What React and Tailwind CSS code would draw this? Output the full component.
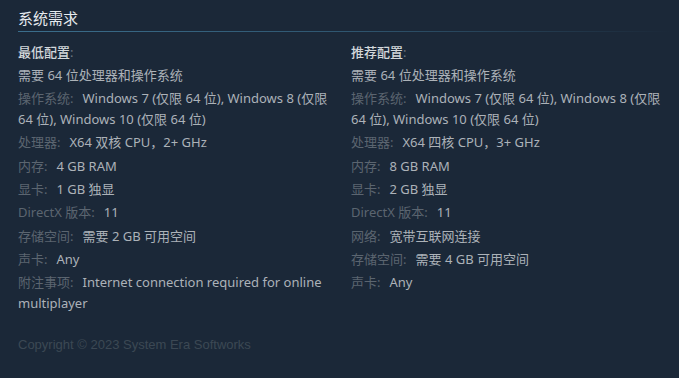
import React from "react";

const minReq = [
  ["操作系统", "Windows 7 (仅限 64 位), Windows 8 (仅限 64 位), Windows 10 (仅限 64 位)"],
  ["处理器", "X64 双核 CPU，2+ GHz"],
  ["内存", "4 GB RAM"],
  ["显卡", "1 GB 独显"],
  ["DirectX 版本", "11"],
  ["存储空间", "需要 2 GB 可用空间"],
  ["声卡", "Any"],
  ["附注事项", "Internet connection required for online multiplayer"],
];

const recReq = [
  ["操作系统", "Windows 7 (仅限 64 位), Windows 8 (仅限 64 位), Windows 10 (仅限 64 位)"],
  ["处理器", "X64 四核 CPU，3+ GHz"],
  ["内存", "8 GB RAM"],
  ["显卡", "2 GB 独显"],
  ["DirectX 版本", "11"],
  ["网络", "宽带互联网连接"],
  ["存储空间", "需要 4 GB 可用空间"],
  ["声卡", "Any"],
];

function ReqColumn({ title, items }) {
  return (
    <div>
      <div className="mb-[2.3px] text-[#d2d7db] font-medium">
        {title}
        <span className="text-[#6b7580] font-normal">:</span>
      </div>
      <div className="mb-[2.3px]">需要 64 位处理器和操作系统</div>
      <ul>
        {items.map(([label, value]) => (
          <li key={label} className="mb-[2.3px]">
            <span className="text-[#5b6570]">{label}:</span>
            <span className="ml-[9px]">{value}</span>
          </li>
        ))}
      </ul>
    </div>
  );
}

export default function App() {
  return (
    <div
      className="w-[679px] h-[378px] bg-[#1b2838] pl-[18px] pr-[8px] pt-[8px] overflow-hidden"
      style={{ fontFamily: '"Noto Sans", "Noto Sans CJK SC", sans-serif' }}
    >
      <h2 className="text-[15px] leading-[20px] text-[#e6eaee] pb-[3px]">系统需求</h2>
      <div className="h-px w-full bg-gradient-to-r from-[#3b6e8c] via-[#2f5670] to-transparent" />
      <div className="mt-[9.5px] grid grid-cols-[324px_1fr] gap-x-[9px] text-[13px] leading-[21px] text-[#acb2b8]">
        <ReqColumn title="最低配置" items={minReq} />
        <ReqColumn title="推荐配置" items={recReq} />
      </div>
      <div
        className="mt-[21px] text-[13px] leading-[16px] text-[#3c4854]"
        style={{ fontFamily: '"Liberation Sans", Arial, sans-serif' }}
      >
        Copyright © 2023 System Era Softworks
      </div>
    </div>
  );
}
